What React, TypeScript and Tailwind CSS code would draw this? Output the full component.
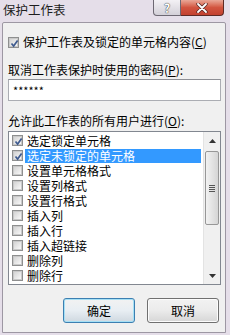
import React from "react";

const font = { fontFamily: '"Noto Sans CJK SC", "Noto Sans", sans-serif' };

function Check({ checked }: { checked: boolean }) {
  return (
    <span className="relative flex h-[11px] w-[11px] shrink-0 items-center justify-center border border-[#8e8f8f] bg-white">
      <span className="h-[9px] w-[9px] border border-[#c9c9c9] bg-linear-to-br from-[#d4d4d4] to-[#f8f8f8]" />
      {checked && (
        <svg className="absolute left-[1px] top-[1px]" width="9" height="9" viewBox="0 0 9 9">
          <path d="M1.5 4.5 L3.6 7 L7.6 1.5" fill="none" stroke="#3f5b8f" strokeWidth="1.7" />
        </svg>
      )}
    </span>
  );
}

const items: { label: string; checked: boolean; selected?: boolean }[] = [
  { label: "选定锁定单元格", checked: true },
  { label: "选定未锁定的单元格", checked: true, selected: true },
  { label: "设置单元格格式", checked: false },
  { label: "设置列格式", checked: false },
  { label: "设置行格式", checked: false },
  { label: "插入列", checked: false },
  { label: "插入行", checked: false },
  { label: "插入超链接", checked: false },
  { label: "删除列", checked: false },
  { label: "删除行", checked: false },
];

export default function App() {
  return (
    <div
      className="flex h-[335px] w-[230px] flex-col overflow-hidden bg-[#e5dee9] text-[12px] leading-[16px] text-black"
      style={font}
    >
      {/* title bar */}
      <div className="flex h-[22px] shrink-0 items-start justify-between pl-[3px] pr-[6px]">
        <span className="mt-[2px] text-[12.5px] leading-[16px] text-[#1e1e1e]">保护工作表</span>
        <div className="flex h-[16px]">
          <div className="flex w-[28px] items-center justify-center rounded-bl-[4px] border border-t-0 border-[#6d6873] bg-linear-to-b from-[#f3f1f5] to-[#d3d0d8]">
            <span className="text-[12px] font-bold leading-[12px] text-white [text-shadow:0_0_1px_#333,0_0_1px_#333]">?</span>
          </div>
          <div className="flex w-[43px] items-center justify-center rounded-br-[4px] border border-l-0 border-t-0 border-[#5e2a25] bg-linear-to-b from-[#e9a797] via-[#d2543f] to-[#c24130]">
            <svg width="12" height="10" viewBox="0 0 12 10">
              <path d="M2 1 L10 9 M10 1 L2 9" stroke="#5a2a26" strokeWidth="3.4" strokeLinecap="round" />
              <path d="M2 1 L10 9 M10 1 L2 9" stroke="#ffffff" strokeWidth="1.8" strokeLinecap="round" />
            </svg>
          </div>
        </div>
      </div>

      {/* client area */}
      <div className="ml-[2px] flex h-[311px] w-[224px] flex-col rounded-t-[2px] border border-[#9d97a3] bg-[#f0f0f0]">
        <div className="ml-[5px] mt-[11px] flex h-[16px] items-center gap-[4px]">
          <Check checked />
          <span>
            保护工作表及锁定的单元格内容(<span className="underline">C</span>)
          </span>
        </div>

        <div className="ml-[5px] mt-[12px] h-[16px]">
          取消工作表保护时使用的密码(<span className="underline">P</span>):
        </div>
        <div className="ml-[5px] mt-[1px] flex h-[22px] w-[213px] items-center border border-[#abadb3] border-t-[#8e9096] bg-white pl-[4px] text-[11px]">
          ******
        </div>

        <div className="ml-[5px] mt-[12px] h-[16px]">
          允许此工作表的所有用户进行(<span className="underline">O</span>):
        </div>

        <div className="ml-[5px] mt-[2px] flex h-[154px] w-[213px] border border-[#828790] bg-white">
          <div className="flex flex-1 flex-col pt-[1px]">
            {items.map((it) => (
              <div key={it.label} className="flex h-[15px] items-center pl-[3px] leading-[14px]">
                <Check checked={it.checked} />
                <span
                  className={
                    it.selected
                      ? "ml-[2px] mr-[2px] flex h-[14px] flex-1 items-center bg-[#3399ff] pl-[2px] text-white"
                      : "ml-[2px] mr-[2px] flex h-[14px] flex-1 items-center pl-[2px]"
                  }
                >
                  {it.label}
                </span>
              </div>
            ))}
          </div>
          {/* scrollbar */}
          <div className="flex w-[17px] flex-col border-l border-[#e3e3e3] bg-[#f0f0f0]">
            <div className="flex h-[17px] items-center justify-center">
              <svg width="7" height="4" viewBox="0 0 7 4">
                <path d="M0 4 L3.5 0 L7 4 Z" fill="#333" />
              </svg>
            </div>
            <div className="mx-[1px] mt-[2px] flex h-[74px] items-center justify-center rounded-[2px] border border-[#979797] bg-linear-to-r from-[#f2f2f2] to-[#d5d5d5]">
              <div className="flex flex-col gap-[1px]">
                <div className="h-[1px] w-[6px] bg-[#555]" />
                <div className="h-[1px] w-[6px] bg-[#555]" />
                <div className="h-[1px] w-[6px] bg-[#555]" />
                <div className="h-[1px] w-[6px] bg-[#555]" />
              </div>
            </div>
            <div className="flex-1" />
            <div className="flex h-[17px] items-center justify-center">
              <svg width="7" height="4" viewBox="0 0 7 4">
                <path d="M0 0 L3.5 4 L7 0 Z" fill="#333" />
              </svg>
            </div>
          </div>
        </div>

        <div className="mr-[6px] mt-[13px] flex justify-end gap-[12px]">
          <button className="flex h-[25px] w-[72px] items-center justify-center rounded-[3px] border border-[#3c7fb1] bg-linear-to-b from-[#f2f2f2] via-[#e8eef3] to-[#cfd8e0] shadow-[inset_0_0_0_1px_#a6e0f5]">
            确定
          </button>
          <button className="flex h-[25px] w-[72px] items-center justify-center rounded-[3px] border border-[#707070] bg-linear-to-b from-[#f2f2f2] via-[#ebebeb] to-[#d6d6d6] shadow-[inset_0_0_0_1px_#fcfcfc]">
            取消
          </button>
        </div>
      </div>
    </div>
  );
}
